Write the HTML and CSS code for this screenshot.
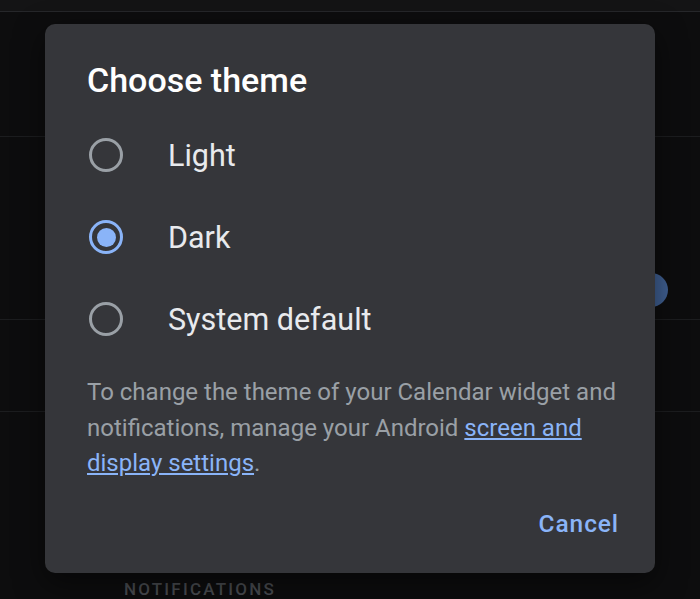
FILE: index.html
```html
<!DOCTYPE html>
<html lang="en">
<head>
    <meta charset="UTF-8">
    <meta name="viewport" content="width=device-width, initial-scale=1.0">
    <title>Choose theme - Calendar settings</title>
    <link rel="stylesheet" href="styles.css">
</head>
<body>
    <div class="settings">
        <div class="status-bar"></div>
        <div class="settings-row row-tall"></div>
        <div class="settings-row row-toggle">
            <span class="toggle-thumb"></span>
        </div>
        <div class="settings-row row-short"></div>
        <div class="section-header">Notifications</div>
    </div>

    <div class="dialog" role="dialog" aria-labelledby="dialogTitle">
        <h2 id="dialogTitle">Choose theme</h2>
        <div class="options">
            <label class="option">
                <span class="radio"></span>
                <span class="option-label">Light</span>
            </label>
            <label class="option selected">
                <span class="radio"></span>
                <span class="option-label">Dark</span>
            </label>
            <label class="option">
                <span class="radio"></span>
                <span class="option-label">System default</span>
            </label>
        </div>
        <p class="note">
            To change the theme of your Calendar widget and notifications, manage your Android
            <a href="#">screen and</a> <a href="#">display settings</a>.
        </p>
        <div class="actions">
            <button type="button" class="text-btn">Cancel</button>
        </div>
    </div>
</body>
</html>
```

FILE: styles.css
```css
body {
    font-family: 'Roboto', 'Noto Sans', sans-serif;
    margin: 0;
    background: #0d0d0e;
    height: 599px;
    overflow: hidden;
    position: relative;
}

.status-bar {
    height: 11px;
    background: #141415;
    border-bottom: 1px solid #26272a;
}

.settings-row {
    border-bottom: 1px solid #1c1d1f;
    position: relative;
}

.row-tall {
    height: 124px;
}

.row-toggle {
    height: 182px;
}

.row-short {
    height: 91px;
}

.toggle-thumb {
    position: absolute;
    right: 32px;
    top: 136px;
    width: 34px;
    height: 34px;
    border-radius: 50%;
    background: #3f5f91;
}

.section-header {
    padding: 167px 0 0 124px;
    color: #484b50;
    font-size: 17px;
    font-weight: 500;
    letter-spacing: 2.2px;
    text-transform: uppercase;
}

.dialog {
    position: absolute;
    left: 45px;
    top: 24px;
    width: 610px;
    height: 549px;
    box-sizing: border-box;
    padding: 32px 36px 0 42px;
    background: #35363a;
    border-radius: 10px;
    box-shadow: 0 10px 30px rgba(0, 0, 0, 0.5);
}

.dialog h2 {
    margin: 0 0 10px;
    color: #ffffff;
    font-size: 34px;
    font-weight: 500;
    line-height: 48px;
}

.options {
    display: flex;
    flex-direction: column;
}

.option {
    display: flex;
    align-items: center;
    gap: 45px;
    height: 82px;
    margin-left: 2px;
}

.radio {
    width: 34px;
    height: 34px;
    box-sizing: border-box;
    border: 3.5px solid #9aa0a6;
    border-radius: 50%;
    display: flex;
    align-items: center;
    justify-content: center;
    flex-shrink: 0;
}

.selected .radio {
    border-color: #8ab4f8;
}

.selected .radio::after {
    content: '';
    width: 19px;
    height: 19px;
    border-radius: 50%;
    background: #8ab4f8;
}

.option-label {
    color: #e8eaed;
    font-size: 30.5px;
}

.note {
    margin: 15px 0 0;
    color: #9aa0a6;
    font-size: 24px;
    line-height: 35.5px;
}

.note a {
    color: #8ab4f8;
}

.actions {
    display: flex;
    justify-content: flex-end;
    margin-top: 27px;
}

.text-btn {
    background: none;
    border: none;
    padding: 0;
    color: #8ab4f8;
    font-family: inherit;
    font-size: 24.5px;
    font-weight: 500;
    letter-spacing: 0.9px;
    cursor: pointer;
}
```
